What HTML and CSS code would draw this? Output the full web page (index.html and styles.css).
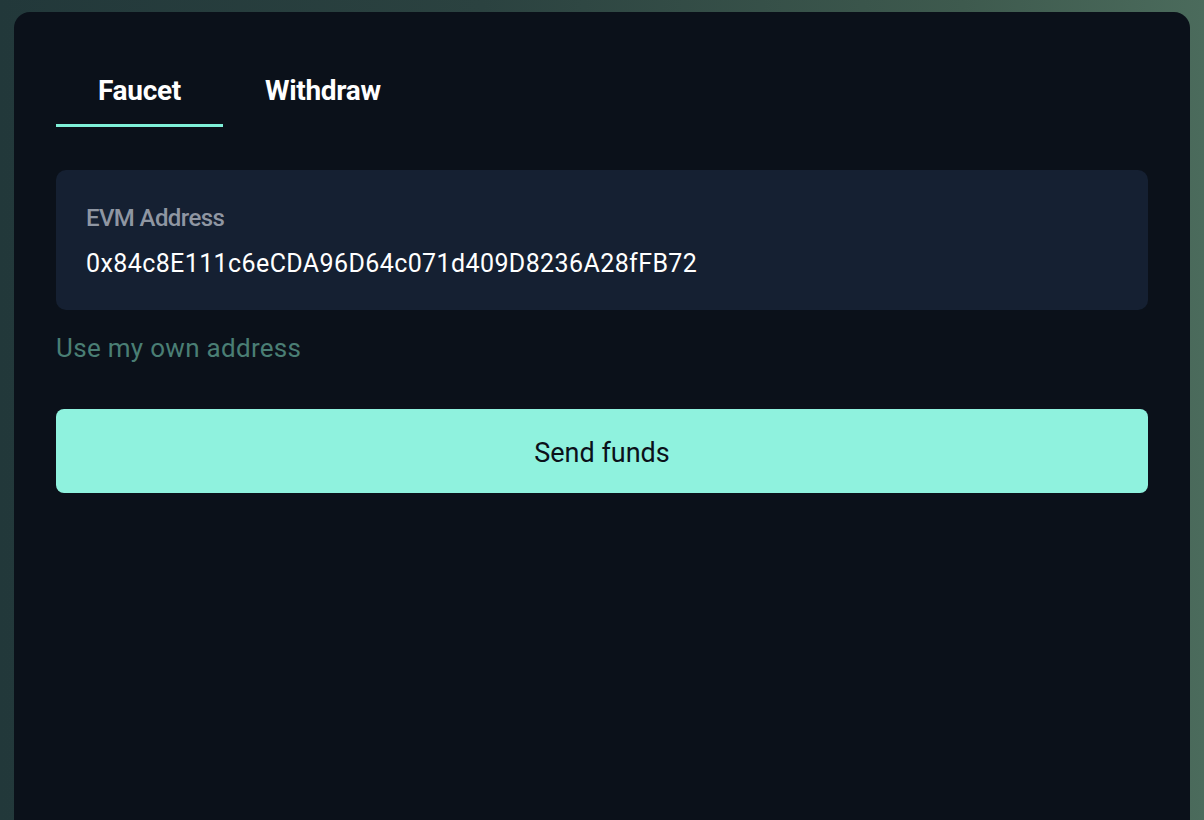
FILE: index.html
```html
<!DOCTYPE html>
<html>
<head>
<meta charset="utf-8">
<link rel="stylesheet" href="styles.css">
</head>
<body>
<div class="page">
  <div class="card">
    <div class="tabs">
      <div class="tab active">Faucet</div>
      <div class="tab">Withdraw</div>
    </div>
    <div class="field">
      <div class="field-label">EVM Address</div>
      <div class="field-value">0x84c8E111c6eCDA96D64c071d409D8236A28fFB72</div>
    </div>
    <div class="own">Use my own address</div>
    <button class="send">Send funds</button>
  </div>
</div>
</body>
</html>
```

FILE: styles.css
```css
html, body {
  margin: 0;
  height: 100%;
}
body {
  background: linear-gradient(90deg, #22383a 0%, #2b4240 40%, #3e5a4e 80%, #4b6b5c 100%);
  font-family: Roboto, "Liberation Sans", sans-serif;
  overflow: hidden;
}
.page {
  padding: 12px 14px 0 14px;
  height: 100%;
  box-sizing: border-box;
}
.card {
  background: #0b111a;
  border-radius: 16px 16px 0 0;
  height: 100%;
  box-sizing: border-box;
  padding: 63px 42px 0 42px;
  display: flex;
  flex-direction: column;
}
.tabs {
  display: flex;
}
.tab {
  color: #ffffff;
  font-weight: 700;
  font-size: 28px;
  line-height: 32px;
  padding: 0 42px 17px 42px;
  border-bottom: 3px solid transparent;
  letter-spacing: -0.3px;
}
.tab.active {
  border-bottom-color: #7ff0d8;
}
.field {
  margin-top: 43px;
  background: #152032;
  border-radius: 10px;
  padding: 34px 30px 0 30px;
  height: 140px;
  box-sizing: border-box;
}
.field-label {
  color: #8f96a2;
  font-size: 24px;
  font-weight: 500;
  line-height: 28px;
  letter-spacing: -0.6px;
}
.field-value {
  color: #ffffff;
  font-size: 25px;
  line-height: 30px;
  margin-top: 17px;
  letter-spacing: 0.4px;
}
.own {
  color: #4a7e74;
  font-size: 26px;
  line-height: 30px;
  margin-top: 23px;
  letter-spacing: 0.3px;
}
.send {
  margin-top: 46px;
  height: 84px;
  width: 100%;
  border: none;
  border-radius: 8px;
  background: #8ff2de;
  color: #0b111a;
  font-family: inherit;
  font-size: 27px;
  padding: 4px 0 0 0;
}
```
